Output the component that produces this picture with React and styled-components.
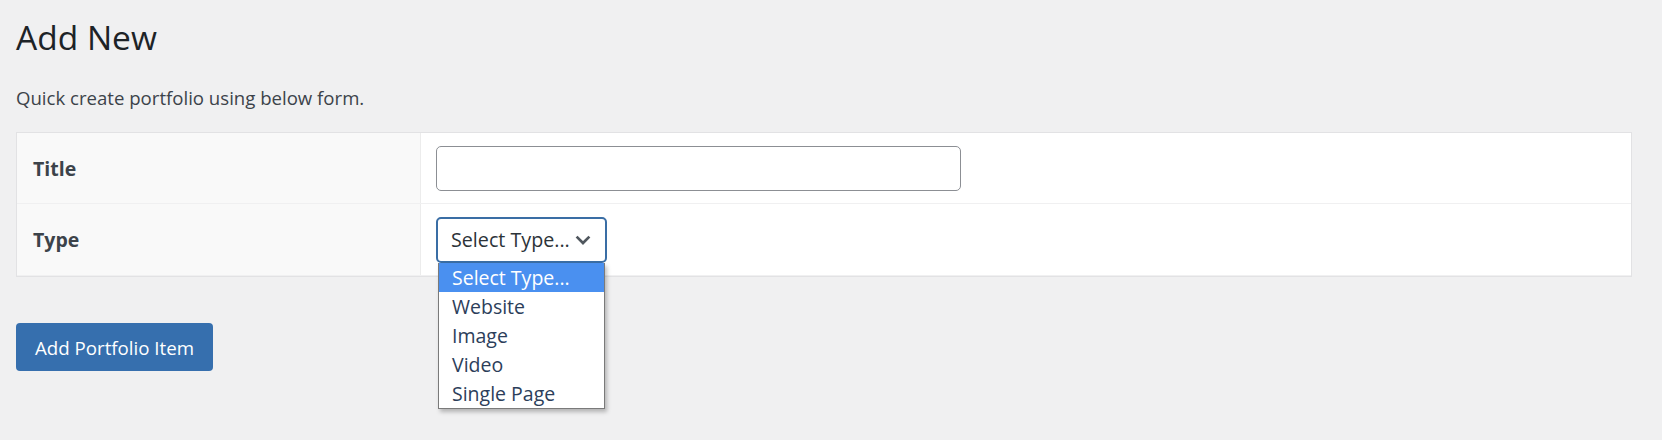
import styled, { createGlobalStyle } from 'styled-components'

const GlobalStyle = createGlobalStyle`
    html, body {
        margin: 0;
        padding: 0;
        background: #f0f0f1;
    }
    body {
        font-family: "Open Sans", "Noto Sans", sans-serif;
        color: #3c434a;
    }
`

const Wrap = styled.div`
    box-sizing: border-box;
    min-height: 440px;
    padding: 0 30px 0 16px;
`

const Heading = styled.h1`
    margin: 0;
    padding: 15px 0 0;
    font-size: 33.5px;
    line-height: 44px;
    font-weight: 400;
    color: #1d2327;
`

const Intro = styled.p`
    margin: 26px 0 0;
    font-size: 18.6px;
    line-height: 26px;
    color: #3c434a;
`

const FormTable = styled.div`
    margin-top: 21px;
    border: 1px solid #e2e2e4;
    background: #fff;
`

const Row = styled.div`
    display: grid;
    grid-template-columns: 404px 1fr;
    height: ${props => props.h}px;
    border-bottom: 1px solid #f0f0f1;
`

const Label = styled.div`
    display: flex;
    align-items: center;
    padding-left: 16px;
    background: #f9f9f9;
    border-right: 1px solid #ececec;
    font-size: 19.5px;
    font-weight: 700;
    color: #3c434a;
`

const Field = styled.div`
    display: flex;
    align-items: center;
    padding-left: 15px;
`

const TextInput = styled.input`
    box-sizing: border-box;
    width: 525px;
    height: 45px;
    border: 1px solid #8c8f94;
    border-radius: 5px;
    background: #fff;
    font: inherit;
`

const SelectWrap = styled.div`
    position: relative;
`

const SelectBox = styled.div`
    box-sizing: border-box;
    width: 171px;
    height: 46px;
    display: flex;
    align-items: center;
    justify-content: space-between;
    padding: 0 14px 0 13px;
    border: 2px solid #3a6ea5;
    border-radius: 5px;
    background: #fff;
    font-size: 19.7px;
    color: #2c3338;
`

const Menu = styled.ul`
    position: absolute;
    top: 46px;
    left: 2px;
    width: 167px;
    box-sizing: border-box;
    margin: 0;
    padding: 0;
    list-style: none;
    background: #fff;
    border: 1px solid #7a7a7a;
    border-top: none;
    box-shadow: 2px 3px 4px rgba(0, 0, 0, 0.25);
    z-index: 5;
`

const Option = styled.li`
    height: 29px;
    line-height: 29px;
    padding-left: 13px;
    font-size: 19.5px;
    background: ${props => props.active ? '#4a90f0' : '#fff'};
    color: ${props => props.active ? '#fff' : '#2c3e5a'};
`

const SubmitButton = styled.button`
    margin-top: 46px;
    width: 197px;
    height: 48px;
    border: none;
    border-radius: 4px;
    background: #366fae;
    color: #fff;
    font-family: inherit;
    font-size: 18.7px;
    cursor: pointer;
`

const Chevron = () => (
    <svg width="16" height="10" viewBox="0 0 16 10" fill="none">
        <path d="M1.6 1.6l6.4 6.4 6.4-6.4" stroke="#50575e" strokeWidth="2.7" />
    </svg>
)

const types = ['Select Type...', 'Website', 'Image', 'Video', 'Single Page']

export default function App() {
    return (
        <>
            <GlobalStyle />
            <Wrap>
                <Heading>Add New</Heading>
                <Intro>Quick create portfolio using below form.</Intro>
                <FormTable>
                    <Row h={70}>
                        <Label>Title</Label>
                        <Field>
                            <TextInput type='text' />
                        </Field>
                    </Row>
                    <Row h={71}>
                        <Label>Type</Label>
                        <Field>
                            <SelectWrap>
                                <SelectBox>
                                    <span>Select Type...</span>
                                    <Chevron />
                                </SelectBox>
                                <Menu>
                                    {types.map((t, i) => (
                                        <Option key={t} active={i === 0}>{t}</Option>
                                    ))}
                                </Menu>
                            </SelectWrap>
                        </Field>
                    </Row>
                </FormTable>
                <SubmitButton>Add Portfolio Item</SubmitButton>
            </Wrap>
        </>
    )
}
